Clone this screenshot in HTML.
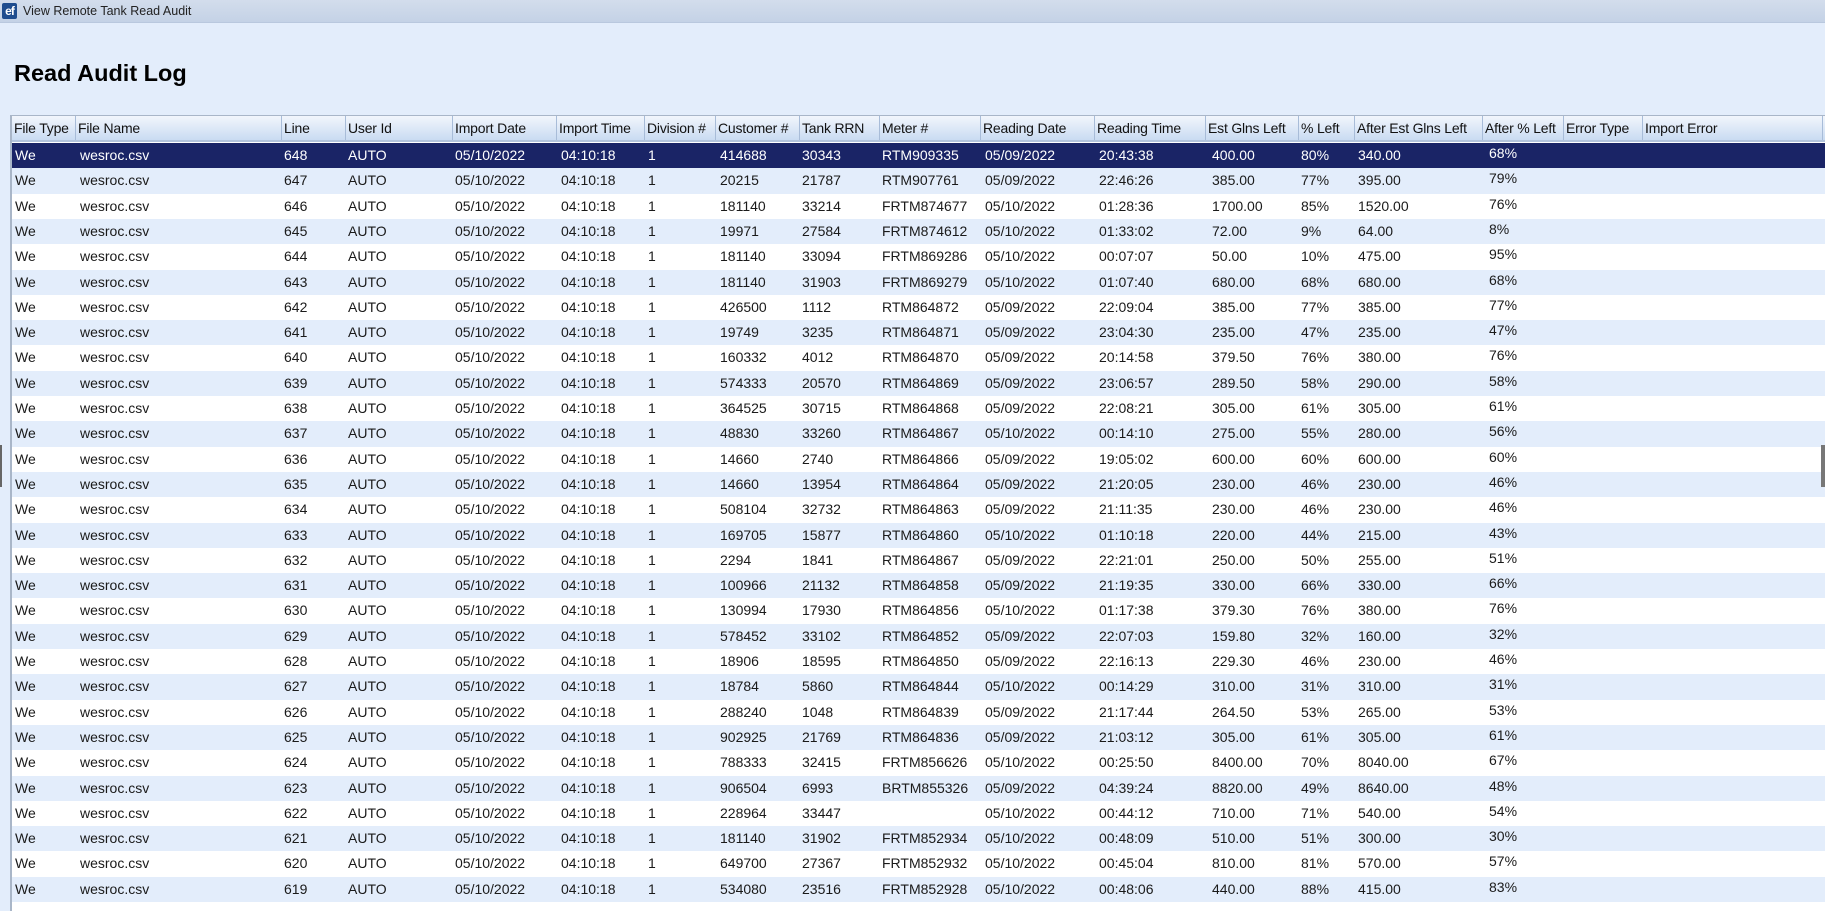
<!DOCTYPE html>
<html><head><meta charset="utf-8"><style>
*{margin:0;padding:0;box-sizing:border-box}
body{width:1825px;height:911px;overflow:hidden;background:#e3edfb;font-family:"Liberation Sans",Arial,sans-serif;position:relative}
.tb{position:absolute;left:0;top:0;width:1825px;height:23px;background:linear-gradient(#d3ddec,#c4d2e6);border-bottom:1px solid #b9c8de}
.ic{position:absolute;left:2px;top:3px;width:15px;height:16px;background:#1f4d8f;border-radius:2px;color:#fff;font-size:12px;font-weight:bold;line-height:16px;text-align:center;letter-spacing:-1px}
.tt{position:absolute;left:23px;top:4px;font-size:12.5px;color:#222}
h1{position:absolute;left:14px;top:60px;font-size:23.5px;font-weight:bold;color:#000}
.grid{position:absolute;left:10px;top:115px;width:1815px;height:796px;background:#fff;border-left:2px solid #a9b6c8;border-top:1px solid #a9b6c8}
.hd{position:absolute;left:0;top:0;width:1813px;height:26px;background:linear-gradient(#f2f6fc,#c9dbf2);border-bottom:2px solid #b3c4dc}
.hd div{position:absolute;top:0;height:24px;line-height:24px;font-size:14px;color:#111;padding-left:2px;border-left:1px solid #a8bcd8;white-space:nowrap;letter-spacing:-0.2px}
.r{position:absolute;left:0;width:1813px;height:25.3px;font-size:14px;color:#1a1a1a;white-space:nowrap}
.r span{position:absolute;top:4px}
.r.a{background:#e3edfb}
.r.s{background:#1a2466;color:#fff}
.pl{top:2px!important}
</style></head><body>
<div class="tb"><div class="ic">ef</div><div class="tt">View Remote Tank Read Audit</div></div>
<h1>Read Audit Log</h1>
<div style="position:absolute;left:0;top:445px;width:2px;height:42px;background:#666"></div>
<div style="position:absolute;left:1821px;top:445px;width:4px;height:42px;background:#777;z-index:5"></div>
<div class="grid">
<div class="hd">
<div style="left:0;border-left:none">File Type</div>
<div style="left:63px">File Name</div>
<div style="left:269px">Line</div>
<div style="left:333px">User Id</div>
<div style="left:440px">Import Date</div>
<div style="left:544px">Import Time</div>
<div style="left:632px">Division #</div>
<div style="left:703px">Customer #</div>
<div style="left:787px">Tank RRN</div>
<div style="left:867px">Meter #</div>
<div style="left:968px">Reading Date</div>
<div style="left:1082px">Reading Time</div>
<div style="left:1193px">Est Glns Left</div>
<div style="left:1286px">% Left</div>
<div style="left:1342px">After Est Glns Left</div>
<div style="left:1470px">After % Left</div>
<div style="left:1551px">Error Type</div>
<div style="left:1630px">Import Error</div>
<div style="left:1810px"></div>
</div>
<div id="rows"></div>
</div>
<script>
var d=[["648","414688","30343","RTM909335","05/09/2022","20:43:38","400.00","80%","340.00","68%"],
["647","20215","21787","RTM907761","05/09/2022","22:46:26","385.00","77%","395.00","79%"],
["646","181140","33214","FRTM874677","05/10/2022","01:28:36","1700.00","85%","1520.00","76%"],
["645","19971","27584","FRTM874612","05/10/2022","01:33:02","72.00","9%","64.00","8%"],
["644","181140","33094","FRTM869286","05/10/2022","00:07:07","50.00","10%","475.00","95%"],
["643","181140","31903","FRTM869279","05/10/2022","01:07:40","680.00","68%","680.00","68%"],
["642","426500","1112","RTM864872","05/09/2022","22:09:04","385.00","77%","385.00","77%"],
["641","19749","3235","RTM864871","05/09/2022","23:04:30","235.00","47%","235.00","47%"],
["640","160332","4012","RTM864870","05/09/2022","20:14:58","379.50","76%","380.00","76%"],
["639","574333","20570","RTM864869","05/09/2022","23:06:57","289.50","58%","290.00","58%"],
["638","364525","30715","RTM864868","05/09/2022","22:08:21","305.00","61%","305.00","61%"],
["637","48830","33260","RTM864867","05/10/2022","00:14:10","275.00","55%","280.00","56%"],
["636","14660","2740","RTM864866","05/09/2022","19:05:02","600.00","60%","600.00","60%"],
["635","14660","13954","RTM864864","05/09/2022","21:20:05","230.00","46%","230.00","46%"],
["634","508104","32732","RTM864863","05/09/2022","21:11:35","230.00","46%","230.00","46%"],
["633","169705","15877","RTM864860","05/10/2022","01:10:18","220.00","44%","215.00","43%"],
["632","2294","1841","RTM864867","05/09/2022","22:21:01","250.00","50%","255.00","51%"],
["631","100966","21132","RTM864858","05/09/2022","21:19:35","330.00","66%","330.00","66%"],
["630","130994","17930","RTM864856","05/10/2022","01:17:38","379.30","76%","380.00","76%"],
["629","578452","33102","RTM864852","05/09/2022","22:07:03","159.80","32%","160.00","32%"],
["628","18906","18595","RTM864850","05/09/2022","22:16:13","229.30","46%","230.00","46%"],
["627","18784","5860","RTM864844","05/10/2022","00:14:29","310.00","31%","310.00","31%"],
["626","288240","1048","RTM864839","05/09/2022","21:17:44","264.50","53%","265.00","53%"],
["625","902925","21769","RTM864836","05/09/2022","21:03:12","305.00","61%","305.00","61%"],
["624","788333","32415","FRTM856626","05/10/2022","00:25:50","8400.00","70%","8040.00","67%"],
["623","906504","6993","BRTM855326","05/09/2022","04:39:24","8820.00","49%","8640.00","48%"],
["622","228964","33447","","05/10/2022","00:44:12","710.00","71%","540.00","54%"],
["621","181140","31902","FRTM852934","05/10/2022","00:48:09","510.00","51%","300.00","30%"],
["620","649700","27367","FRTM852932","05/10/2022","00:45:04","810.00","81%","570.00","57%"],
["619","534080","23516","FRTM852928","05/10/2022","00:48:06","440.00","88%","415.00","83%"]];
var h="";
for(var i=0;i<d.length;i++){var r=d[i];var c=i==0?"s":(i%2?"a":"");
h+='<div class="r '+c+'" style="top:'+(27+i*25.3)+'px">'+
'<span style="left:3px">We</span><span style="left:68px">wesroc.csv</span>'+
'<span style="left:272px">'+r[0]+'</span><span style="left:336px">AUTO</span>'+
'<span style="left:443px">05/10/2022</span><span style="left:549px">04:10:18</span>'+
'<span style="left:636px">1</span><span style="left:708px">'+r[1]+'</span>'+
'<span style="left:790px">'+r[2]+'</span><span style="left:870px">'+r[3]+'</span>'+
'<span style="left:973px">'+r[4]+'</span><span style="left:1087px">'+r[5]+'</span>'+
'<span style="left:1200px">'+r[6]+'</span><span style="left:1289px">'+r[7]+'</span>'+
'<span style="left:1346px">'+r[8]+'</span><span class="pl" style="left:1477px">'+r[9]+'</span></div>';}
document.getElementById("rows").innerHTML=h;
</script>
</body></html>
